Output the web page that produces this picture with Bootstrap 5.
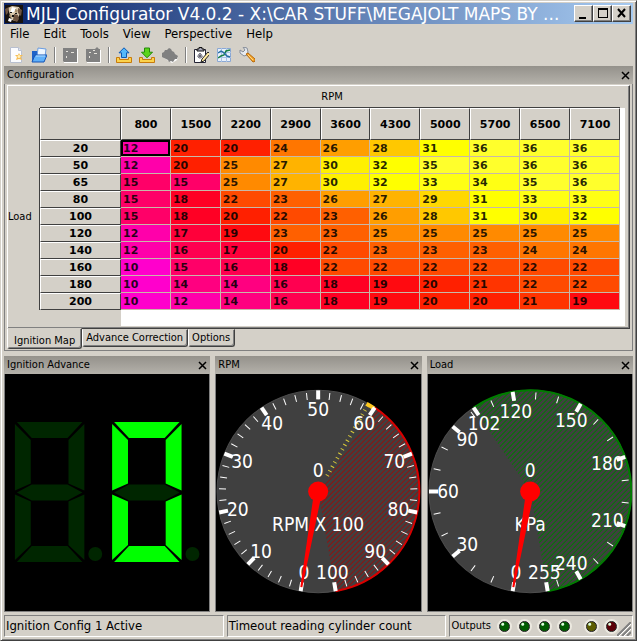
<!DOCTYPE html>
<html lang="en">
<head>
<meta charset="utf-8">
<meta name="viewport" content="width=device-width, initial-scale=1">
<title>MJLJ Configurator</title>
<link href="https://cdn.jsdelivr.net/npm/bootstrap@5.3.0/dist/css/bootstrap.min.css" rel="stylesheet">
<style>
:root { --face:#d4d0c8; --shade:#808080; --deep:#404040; }
body { background:var(--face); color:#000; font:11px/16px "DejaVu Sans Condensed","DejaVu Sans",sans-serif; }
button { font:inherit; color:#000; }
.app-window { height:100vh; min-height:560px; background:var(--face); border:1px solid; border-color:#d4d0c8 #404040 #404040 #d4d0c8; box-shadow:inset 1px 1px #fff, inset -1px -1px #808080; padding:2px 3px 3px 3px; }
.title-bar { height:21px; background:linear-gradient(90deg,#0a246a,#a6caf0); color:#fff; padding:0 2px 0 1px; }
.title-bar h1 { font:17px/20px "DejaVu Sans",sans-serif; margin:0 0 0 3px; white-space:nowrap; overflow:hidden; }
.win-btn { width:19px; height:17px; padding:0; background:var(--face); border:1px solid; border-color:#fff #404040 #404040 #fff; box-shadow:inset -1px -1px #808080; display:flex; }
.menu-row { height:19px; padding-left:6px; gap:14px; }
.menu-row button, .tool-row button, .pane-close { background:none; border:0; padding:0; }
.menu-row button { font-size:13px; line-height:19px; }
.tool-row { height:23px; padding:0 4px; }
.tool-row button { width:16px; height:16px; margin-right:7px; display:flex; }
.tool-row .rule { width:2px; height:16px; background:#808080; border-right:1px solid #fff; margin-right:6px; }
.pane-head { height:18px; background:linear-gradient(#94918b,#b4b1aa); padding:0 3px; flex:none; }
.pane-head h2 { font-size:11px; line-height:18px; margin:0; font-weight:400; }
.pane-close { width:9px; height:9px; display:flex; }
.config-body { border:1px solid #808080; border-top:0; padding:1px 2px 1px 2px; }
.map-page { border:1px solid; border-color:#fff #404040 #404040 #fff; box-shadow:inset -1px -1px #808080; padding:0 4px 2px 0; display:grid; grid-template:22px auto / 31px 1fr; }
.grid-area { background:linear-gradient(90deg,var(--face) 82px,#fff 82px); padding:0 5px 16px 0; }
.map-grid { width:100%; table-layout:fixed; border-collapse:separate; border-spacing:0; font:bold 11px/15px "DejaVu Sans",sans-serif; border-left:1px solid #404040; }
.map-grid th { background:var(--face); text-align:center; border:1px solid; border-color:#fff #404040 #404040 #fff; padding:0; height:17px; }
.map-grid thead th { height:32px; box-shadow:0 -1px #404040; }
.map-grid th:first-child { width:81px; }
.map-grid td { padding:1px 0 0 2px; height:17px; border-right:1px solid #c8b8a8; border-bottom:1px solid #c8b8a8; color:rgba(0,0,0,.86); }
.map-grid td.picked { box-shadow:inset 0 0 0 2px #000; }
.v10{background:#ff00cc}.v12{background:#ff00aa}.v14{background:#ff0080}.v15{background:#ff0068}.v16{background:#ff0050}.v17{background:#ff003a}.v18{background:#ff0024}.v19{background:#ff0a10}.v20{background:#ff2000}.v21{background:#ff3400}.v22{background:#ff4a00}.v23{background:#ff6000}.v24{background:#ff7600}.v25{background:#ff8a00}.v26{background:#ff9e00}.v27{background:#ffb300}.v28{background:#ffc800}.v29{background:#ffd800}.v30{background:#fff000}.v31,.v32{background:#ffff00}.v33,.v34{background:#ffff14}.v35,.v36{background:#ffff2c}
.sheet-tab { background:var(--face); border:1px solid; border-color:var(--face) #404040 #404040 #fff; box-shadow:inset -1px -1px #808080; border-radius:0 0 3px 3px; padding:0 4px 1px 3px; height:18px; line-height:16px; white-space:nowrap; }
.sheet-tab.active { height:21px; margin-top:-1px; padding:4px 6px 1px 6px; }
.gauge-row { gap:5px; margin-top:5px; flex:1 1 0; min-height:0; }
.gauge-pane { flex:1 1 0; min-width:0; }
.gauge-face { background:#000; border:1px solid #808080; border-top-width:0; min-height:0; flex:1 1 0; display:flex; }
.gauge-face svg { width:100%; height:100%; display:block; }
.gauge-face text { font:19px "DejaVu Sans Condensed","DejaVu Sans",sans-serif; fill:#fff; text-anchor:middle; }
.status-row { margin-top:3px; gap:3px; height:22px; }
.status-cell { border:1px solid; border-color:#808080 #fff #fff #808080; padding:0 1px; font-size:13px; line-height:20px; white-space:nowrap; overflow:hidden; }
.status-cell.outputs { font-size:11px; }
.lamp { width:11px; height:11px; border-radius:50%; border:1px solid #222; box-shadow:0 0 0 2px #ece9e0; margin-right:9px; background:radial-gradient(circle at 30% 25%,#dfd 0 1px,var(--glow) 2px 5px); }
.lamp.green { --glow:#005c00; } .lamp.olive { --glow:#5c5c00; } .lamp.red { --glow:#5c0008; }
.grip { width:14px; height:14px; }
</style>
</head>
<body>
<div class="app-window d-flex flex-column">
  <header class="title-bar d-flex align-items-center flex-shrink-0">
    <svg width="18" height="18" viewBox="0 0 18 18" class="flex-shrink-0"><path fill="#17120e" d="M0 0h18v18H0z"/><path fill="#d9c9ae" d="M3 3l4-2 7 1 2 4-2 5-3 5-4-1-2-5z"/><path fill="#6e5440" d="M0 4l4-2-1 6-2 2zM13 3l4 2-1 6-3-3zM9 9l4 1 1 4-2 3-4-2z"/><path fill="#fff" d="M7 2l4 1-2 4-4 1zM4 13l3 1-1 3-3-1z"/><path fill="#a9906f" d="M10 4l3 1-1 3-2-1zM5 9l2 2-1 2-2-2z"/><path fill="#111" d="M5 7h2v1H5zM10 8h2v1h-2zM7 10h2v2H7z"/></svg>
    <h1 class="flex-grow-1">MJLJ Configurator V4.0.2 - X:\CAR STUFF\MEGAJOLT MAPS BY ...</h1>
    <button class="win-btn" aria-label="Minimize"><svg width="17" height="15"><path d="M4 11h7v2H4z"/></svg></button>
    <button class="win-btn" aria-label="Maximize"><svg width="17" height="15"><path d="M4 2h10v10H4zM5 4v7h8V4z" fill-rule="evenodd"/></svg></button>
    <button class="win-btn" aria-label="Close"><svg width="17" height="15"><path d="M5 3l7 8M12 3l-7 8" stroke="#000" stroke-width="2"/></svg></button>
  </header>
  <nav class="menu-row d-flex flex-shrink-0" aria-label="Main menu">
    <button>File</button><button>Edit</button><button>Tools</button><button>View</button><button>Perspective</button><button>Help</button>
  </nav>
  <div class="tool-row d-flex align-items-center flex-shrink-0" role="toolbar" aria-label="Tools">
    <button aria-label="New"><svg width="16" height="16"><path d="M2.500.5h8l3 3v12h-11z" fill="#fbfcff" stroke="#b9c0d0"/><path d="M10.500.5v3h3" fill="#dde4f2" stroke="#b9c0d0"/><path d="M11 6l1 2 3 0-2 2 1 3-3-1-3 1 1-3-2-2h3z" fill="#f6bd55"/><circle cx="11" cy="9.500" r="1.500" fill="#fff0c0"/></svg></button>
    <button aria-label="Open"><svg width="17" height="16"><path d="M1 14V4h5l1 2h6v8z" fill="#1e62c8"/><path d="M7 1l8 1-1 8H6z" fill="#eef6ff" stroke="#6a9ce0"/><path d="M1 15l3-7h12l-3 7z" fill="#5fb0fa" stroke="#1553b4"/><path d="M5 9h9" stroke="#b5dcff"/></svg></button>
    <span class="rule"></span>
    <button aria-label="Save" disabled><svg width="16" height="16"><path d="M2 2h14v14H2z" fill="#fff"/><path d="M1 1h14v14H2l-1-1z" fill="#808080"/><path d="M4 4h2v1H4zM9 5h3v1H9zM4 9h1v2H4z" fill="#e6e3dc"/></svg></button>
    <button aria-label="Save as" disabled><svg width="16" height="16"><path d="M2 3h14v13H2z" fill="#fff"/><path d="M1 2h9l2-2 2 2h1v13H2l-1-1z" fill="#808080"/><path d="M4 5h2v1H4zM9 6h3v1H9zM4 9h1v2H4zM8 3h2v1H8z" fill="#e6e3dc"/></svg></button>
    <span class="rule"></span>
    <button aria-label="Read from controller"><svg width="17" height="16"><path d="M.5 10.500h3v2h9v-2h3v5H.5z" fill="#fbd24c" stroke="#c87b0c"/><path d="M8 .8l5 5h-2.500v4.700h-5V5.800H3z" fill="#55b8fb" stroke="#0b58b5"/></svg></button>
    <button aria-label="Write to controller"><svg width="17" height="16"><path d="M.5 10.500h3v2h9v-2h3v5H.5z" fill="#fbd24c" stroke="#c87b0c"/><path d="M5.500 1h5v4.200h3L8 10.800 2.500 5.200h3z" fill="#5bd41b" stroke="#248b0a"/></svg></button>
    <button aria-label="Burn" disabled><svg width="17" height="16"><path d="M2 9l7-5 7 6-1 3-5 3-8-5z" fill="#fff"/><path d="M0 6l2-1 1-2 2 0 2-2 2 1 1 2 2 1 1 2 3 2-1 3-2 0-2 3-2-1-2 1-1-2-2-1-2-1-2-1z" fill="#808080"/></svg></button>
    <span class="rule"></span>
    <button aria-label="Properties"><svg width="17" height="16"><path d="M1.500 2.500h11v13h-11z" fill="#fff" stroke="#223"/><path d="M4 4V2h2V.5h3V2h2v2z" fill="#aab" stroke="#111"/><path d="M7 6l3 3-3 3-3-3z" fill="none" stroke="#445" stroke-dasharray="1 1"/><path d="M5 9h4M7 7v4" stroke="#334"/><path d="M15 5l2 2-6 7-3 1 1-3z" fill="#ffe9a0" stroke="#222"/></svg></button>
    <button aria-label="Chart"><svg width="16" height="16"><path d="M1.500 1.500h13v13h-13z" fill="#e8f0fb" stroke="#8ba8d4"/><path d="M1 5.500h14M1 10.500h14M5.500 1v14M10.500 1v14" stroke="#a9c3e6"/><path d="M2 11l3-2 3-1 2-4 4-1" fill="none" stroke="#177f43" stroke-width="1.500"/><path d="M2 6l3-2 2 1 4 4 3 1" fill="none" stroke="#286da4" stroke-width="1.500"/></svg></button>
    <button aria-label="Options"><svg width="17" height="16"><path d="M1 3l3 2 2-2-2-3 4 1 1 4-1 3-3 1-4-3z" fill="#e8ecf1" stroke="#858c98"/><path d="M7 7l2-1 7 6q1 3-2 3z" fill="#f6a52c" stroke="#b76a0c"/><path d="M9 8l5 5" stroke="#ffda83"/></svg></button>
  </div>

  <section class="flex-shrink-0">
    <div class="pane-head d-flex align-items-center justify-content-between"><h2>Configuration</h2><button class="pane-close" aria-label="Close Configuration"><svg width="9" height="9"><path d="M1 1l7 7M8 1L1 8" stroke="#000" stroke-width="1.500"/></svg></button></div>
    <div class="config-body">
      <div class="map-page">
        <div></div><div class="text-center lh-lg">RPM</div>
        <div class="d-flex align-items-center"><span>Load</span></div>
        <div class="grid-area"><table class="map-grid"><thead><tr id="rpmHeads"></tr></thead><tbody id="mapRows"></tbody></table></div>
      </div>
      <div class="d-flex" role="tablist">
        <button class="sheet-tab active" role="tab" aria-selected="true">Ignition Map</button>
        <button class="sheet-tab" role="tab" aria-selected="false">Advance Correction</button>
        <button class="sheet-tab" role="tab" aria-selected="false">Options</button>
      </div>
    </div>
  </section>

  <main class="gauge-row d-flex">
    <section class="gauge-pane d-flex flex-column">
      <div class="pane-head d-flex align-items-center justify-content-between"><h2>Ignition Advance</h2><button class="pane-close" aria-label="Close Ignition Advance"><svg width="9" height="9"><path d="M1 1l7 7M8 1L1 8" stroke="#000" stroke-width="1.500"/></svg></button></div>
      <div class="gauge-face"><svg viewBox="0 1 206 236" role="img" aria-label="Ignition advance 0">
        <defs>
          <g id="ring"><path d="M2 0h66L53 16H17zM0 2l16 16v44L0 69zM70 2v67l-16-7V18zM0 73l16 7v44L0 139zM70 73v66l-16-15V80zM17 125h36l15 16H2z"/></g>
          <path id="midbar" d="M2 71l15-8h36l15 8-15 8H17z"/>
        </defs>
        <g fill="#002600"><g transform="translate(10 48)"><use href="#ring"/><use href="#midbar"/></g><circle cx="91" cy="181" r="7"/><use href="#midbar" x="108" y="48"/><circle cx="189" cy="181" r="7"/></g>
        <use href="#ring" x="108" y="48" fill="#0f0"/>
      </svg></div>
    </section>
    <section class="gauge-pane d-flex flex-column">
      <div class="pane-head d-flex align-items-center justify-content-between"><h2>RPM</h2><button class="pane-close" aria-label="Close RPM"><svg width="9" height="9"><path d="M1 1l7 7M8 1L1 8" stroke="#000" stroke-width="1.500"/></svg></button></div>
      <div class="gauge-face"><svg id="rpmDial" viewBox="0 1 204 236" role="img" aria-label="RPM gauge"></svg></div>
    </section>
    <section class="gauge-pane d-flex flex-column">
      <div class="pane-head d-flex align-items-center justify-content-between"><h2>Load</h2><button class="pane-close" aria-label="Close Load"><svg width="9" height="9"><path d="M1 1l7 7M8 1L1 8" stroke="#000" stroke-width="1.500"/></svg></button></div>
      <div class="gauge-face"><svg id="loadDial" viewBox="0 1 204 236" role="img" aria-label="Load gauge"></svg></div>
    </section>
  </main>

  <footer class="status-row d-flex flex-shrink-0">
    <div class="status-cell col">Ignition Config 1 Active</div>
    <div class="status-cell col">Timeout reading cylinder count</div>
    <div class="status-cell outputs d-flex align-items-center"><span class="me-2">Outputs</span>
      <i class="lamp green"></i><i class="lamp green"></i><i class="lamp green"></i><i class="lamp green me-3"></i><i class="lamp olive"></i><i class="lamp red me-0"></i>
      <svg class="grip align-self-end" viewBox="0 0 14 14"><path d="M0 14L14 0M5 14l9-9M10 14l4-4" stroke="#808080" stroke-width="2"/><path d="M2 14L14 2M7 14l7-7" stroke="#fff"/></svg>
    </div>
  </footer>
</div>
<script src="https://cdn.jsdelivr.net/npm/bootstrap@5.3.0/dist/js/bootstrap.bundle.min.js"></script>
<script>
const rpm = [800,1500,2200,2900,3600,4300,5000,5700,6500,7100];
const map = {
  20:[12,20,20,24,26,28,31,36,36,36], 50:[12,20,25,27,30,32,35,36,36,36],
  65:[15,15,25,27,30,32,33,34,35,36], 80:[15,18,22,23,26,27,29,31,33,33],
  100:[15,18,20,22,23,26,28,31,30,32], 120:[12,17,19,23,23,25,25,25,25,25],
  140:[12,16,17,20,22,23,23,23,24,24], 160:[10,15,16,18,22,22,22,22,22,22],
  180:[10,14,14,16,18,19,20,21,22,22], 200:[10,12,14,16,18,19,20,20,21,19]
};
document.getElementById('rpmHeads').innerHTML = '<th></th>' + rpm.map(r => `<th scope="col">${r}</th>`).join('');
document.getElementById('mapRows').innerHTML = Object.entries(map).map(([load, row], y) =>
  `<tr><th scope="row">${load}</th>` + row.map((v, x) => `<td class="v${v}${x + y ? '' : ' picked'}">${v}</td>`).join('') + '</tr>').join('');

const CX = 102, CY = 118;
function at(deg, r) { const a = deg * Math.PI / 180; return [CX + r * Math.sin(a), CY - r * Math.cos(a)].map(n => Math.round(n * 10) / 10); }
function sector(a, b, r) { return `M${CX} ${CY}L${at(a, r)}A${r} ${r} 0 ${b - a > 180 ? 1 : 0} 1 ${at(b, r)}z`; }
function arc(a, b, r) { return `M${at(a, r)}A${r} ${r} 0 ${b - a > 180 ? 1 : 0} 1 ${at(b, r)}`; }
// Scale runs clockwise over 340 degrees starting just left of the bottom.
function dial(id, o) {
  const bearing = v => 190 + v / o.max * 340;
  let lines = '';
  for (let k = -200; k < 440; k += 5) lines += `M${k} 240L${k + 240} 0`;
  let s = `<defs><clipPath id="${id}Zone"><path d="${sector(bearing(o.from), 530, 101)}"/></clipPath></defs>
    <circle cx="${CX}" cy="${CY}" r="101" fill="#404040" stroke="#4c4c4c"/>`;
  s += `<path d="${lines}" clip-path="url(#${id}Zone)" stroke="${o.hatch}" fill="none"/><path d="${arc(bearing(o.from), 530, 101)}" fill="none" stroke="${o.rim}" stroke-width="2"/>`;
  if (o.warn) {
    s += `<path d="M${at(bearing(o.warn) + 1, 18)}L${at(bearing(o.warn) + 1, 99)}" stroke="#d8c838" stroke-width="4" stroke-dasharray="1 4"/>
      <path d="${arc(bearing(o.warn), bearing(o.from), 100)}" fill="none" stroke="#ffc820" stroke-width="4"/>`;
  }
  for (let v = o.minor; v < o.max; v += o.minor) s += `<path d="M${at(bearing(v), 92)}L${at(bearing(v), 99)}" stroke="#fff"/>`;
  for (const v of o.labels) {
    const [x, y] = at(bearing(v), 82);
    s += `<path d="M${at(bearing(v), 92)}L${at(bearing(v), 101)}" stroke="#fff" stroke-width="4"/><text x="${x}" y="${y + 7}">${v}</text>`;
  }
  s += `<text x="${CX}" y="104">0</text><text x="${CX}" y="157">${o.unit}</text>
    <path d="M${CX - 3} ${CY}L${at(190, 97)}L${CX + 3} ${CY}z" fill="red" stroke="red" stroke-width="2"/><circle cx="${CX}" cy="${CY}" r="10" fill="red"/>`;
  document.getElementById(id).innerHTML = s;
}
dial('rpmDial', { max:100, minor:2, from:60, warn:58.500, labels:[0,10,20,30,40,50,60,70,80,90,100], unit:'RPM X 100', hatch:'#8c1414', rim:'#d80000' });
dial('loadDial', { max:255, minor:10, from:102, labels:[0,30,60,90,102,120,150,180,210,240,255], unit:'KPa', hatch:'#087408', rim:'#007c00' });
</script>
</body>
</html>
